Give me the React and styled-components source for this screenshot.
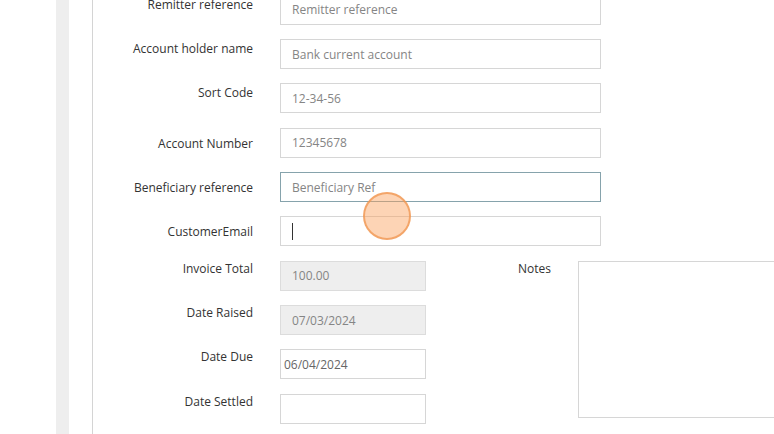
import React from 'react'
import styled, { createGlobalStyle } from 'styled-components'

const GlobalStyle = createGlobalStyle`
  html, body {
    margin: 0;
    padding: 0;
    background: #ffffff;
    overflow: hidden;
  }
  * { box-sizing: border-box; }
`

const topRows = [
  { label: 'Remitter reference', value: 'Remitter reference', align: 'top' },
  { label: 'Account holder name', value: 'Bank current account', align: 'top' },
  { label: 'Sort Code', value: '12-34-56', align: 'top' },
  { label: 'Account Number', value: '12345678', align: 'center' },
  { label: 'Beneficiary reference', value: 'Beneficiary Ref', align: 'center', focused: true },
  { label: 'CustomerEmail', value: '', align: 'center', caret: true },
]

const bottomRows = [
  { label: 'Invoice Total', value: '100.00', disabled: true },
  { label: 'Date Raised', value: '07/03/2024', disabled: true },
  { label: 'Date Due', value: '06/04/2024', tight: true },
  { label: 'Date Settled', value: '' },
]

const App = () => {
  return (
    <>
      <GlobalStyle />
      <Shell>
        <SideGap />
        <Strip />
        <Panel>
          <Content>
            <Form>
              {topRows.map((r) => (
                <Row key={r.label}>
                  <Label align={r.align}>{r.label}</Label>
                  <Field width={321} focused={r.focused}>
                    {r.caret ? <Caret /> : <FieldText>{r.value}</FieldText>}
                  </Field>
                </Row>
              ))}
              <Lower>
                <LeftCol>
                  {bottomRows.map((r) => (
                    <Row key={r.label}>
                      <Label align="raised">{r.label}</Label>
                      <Field width={146} disabled={r.disabled} tight={r.tight}>
                        <FieldText dark={r.tight}>{r.value}</FieldText>
                      </Field>
                    </Row>
                  ))}
                </LeftCol>
                <NotesBlock>
                  <NotesLabel>Notes</NotesLabel>
                  <NotesArea />
                </NotesBlock>
              </Lower>
            </Form>
          </Content>
        </Panel>
        <ClickMark />
      </Shell>
    </>
  )
}

export default App

const Shell = styled.div`
  position: relative;
  display: flex;
  width: 774px;
  height: 434px;
  overflow: hidden;
  font-family: "Open Sans", "Liberation Sans", sans-serif;
  font-size: 12px;
`

const SideGap = styled.div`
  width: 56px;
  flex-shrink: 0;
`

const Strip = styled.div`
  width: 13px;
  flex-shrink: 0;
  background: #eeeeee;
`

const Panel = styled.div`
  flex: 1;
  display: flex;
  padding-left: 23px;
`

const Content = styled.div`
  flex: 1;
  border-left: 1px solid #d4d4d4;
`

const Form = styled.div`
  margin-top: -5.3px;
  display: flex;
  flex-direction: column;
`

const Row = styled.div`
  display: flex;
  height: 30px;
  margin-bottom: 14.33px;
`

const Label = styled.div`
  width: 160px;
  flex-shrink: 0;
  margin-right: 27px;
  text-align: right;
  color: #333333;
  line-height: 17px;
  padding-top: ${({ align }) => (align === 'raised' ? 0 : 1)}px;
  margin-top: ${({ align }) => (align === 'raised' ? -1 : 0)}px;
  align-self: ${({ align }) => (align === 'center' ? 'center' : 'flex-start')};
`

const Field = styled.div`
  position: relative;
  width: ${({ width }) => width}px;
  height: 30px;
  display: flex;
  align-items: center;
  padding-left: ${({ tight }) => (tight ? 3 : 11)}px;
  background: ${({ disabled }) => (disabled ? '#eeeeee' : '#ffffff')};
  border: 1px solid ${({ focused, disabled }) => (focused ? '#86a3ac' : disabled ? '#dcdcdc' : '#d6d6d6')};
`

const FieldText = styled.span`
  color: ${({ dark }) => (dark ? '#666666' : '#858585')};
  white-space: nowrap;
`

const Caret = styled.span`
  width: 1px;
  height: 17px;
  background: #333333;
`

const Lower = styled.div`
  display: flex;
  align-items: flex-start;
`

const LeftCol = styled.div`
  display: flex;
  flex-direction: column;
`

const NotesBlock = styled.div`
  display: flex;
  margin-left: 92px;
`

const NotesLabel = styled.div`
  color: #333333;
  line-height: 17px;
  margin-top: -1px;
  margin-right: 27px;
`

const NotesArea = styled.div`
  width: 230px;
  height: 157px;
  border: 1px solid #d6d6d6;
  background: #ffffff;
`

const ClickMark = styled.div`
  position: absolute;
  left: 363px;
  top: 192px;
  width: 48px;
  height: 48px;
  border-radius: 50%;
  background: rgba(250, 160, 90, 0.45);
  border: 2px solid rgba(240, 150, 80, 0.75);
`
